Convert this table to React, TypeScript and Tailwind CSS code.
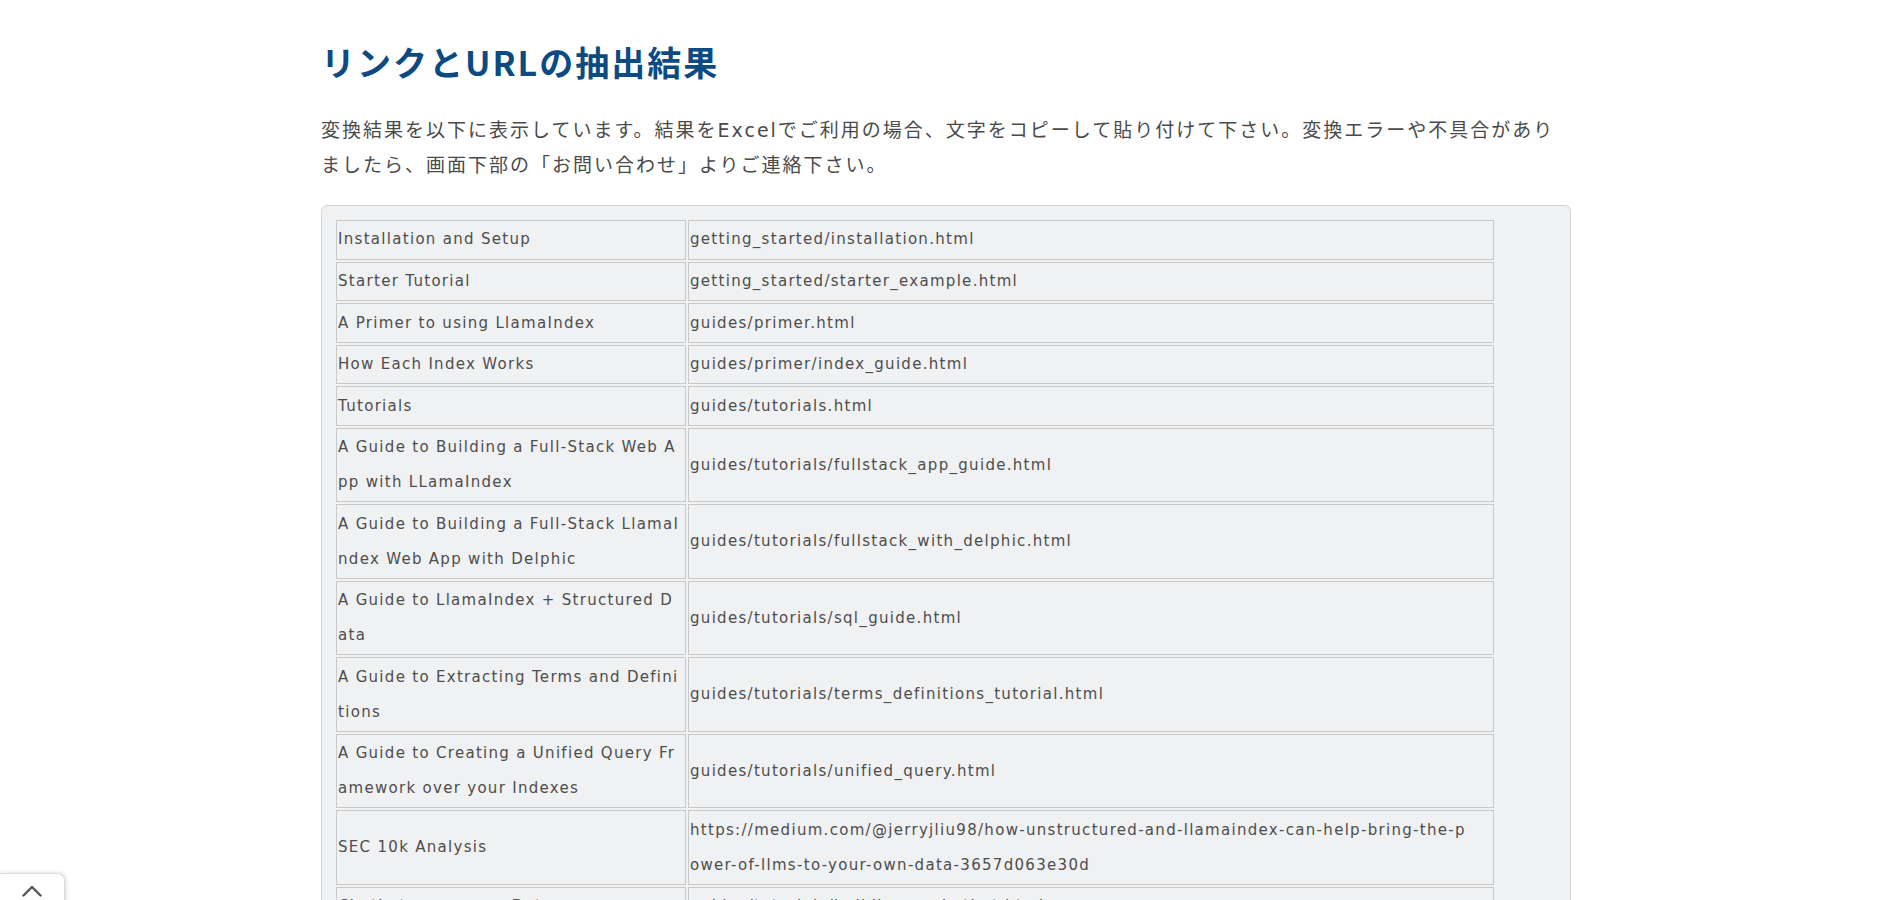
interface LinkRow {
  title: string;
  url: string;
}

const rows: LinkRow[] = [
  { title: "Installation and Setup", url: "getting_started/installation.html" },
  { title: "Starter Tutorial", url: "getting_started/starter_example.html" },
  { title: "A Primer to using LlamaIndex", url: "guides/primer.html" },
  { title: "How Each Index Works", url: "guides/primer/index_guide.html" },
  { title: "Tutorials", url: "guides/tutorials.html" },
  { title: "A Guide to Building a Full-Stack Web App with LLamaIndex", url: "guides/tutorials/fullstack_app_guide.html" },
  { title: "A Guide to Building a Full-Stack LlamaIndex Web App with Delphic", url: "guides/tutorials/fullstack_with_delphic.html" },
  { title: "A Guide to LlamaIndex + Structured Data", url: "guides/tutorials/sql_guide.html" },
  { title: "A Guide to Extracting Terms and Definitions", url: "guides/tutorials/terms_definitions_tutorial.html" },
  { title: "A Guide to Creating a Unified Query Framework over your Indexes", url: "guides/tutorials/unified_query.html" },
  { title: "SEC 10k Analysis", url: "https://medium.com/@jerryjliu98/how-unstructured-and-llamaindex-can-help-bring-the-power-of-llms-to-your-own-data-3657d063e30d" },
  { title: "Chatbots over your Data", url: "guides/tutorials/building_a_chatbot.html" },
  { title: "Using LlamaIndex with Local Models", url: "guides/tutorials/local_models.html" },
];

const jpFont = { fontFamily: '"Noto Sans CJK JP", "Noto Sans", sans-serif' };

const App = () => {
  return (
    <div className="min-h-screen bg-white pb-20" style={jpFont}>
      <div className="mx-auto w-[1250px] pt-[38px]">
        <h1 className="text-[34px] leading-[48px] font-bold tracking-[2px] text-[#0b4b82]">
          リンクとURLの抽出結果
        </h1>
        <p
          className="mt-[27px] text-[19px] leading-[35px] tracking-[2px] text-[#4a4a4a]"
          style={{ fontFamily: '"DejaVu Sans", "Noto Sans CJK JP", sans-serif' }}
        >
          変換結果を以下に表示しています。結果をExcelでご利用の場合、文字をコピーして貼り付けて下さい。変換エラーや不具合がありましたら、画面下部の「お問い合わせ」よりご連絡下さい。
        </p>
        {/* 結果テーブル */}
        <div className="mt-[22px] rounded-[6px] border border-[#d3d3d3] bg-[#f0f1f3] p-[12px]">
          <table
            className="w-[1162px] table-fixed border-separate border-spacing-[2px] text-[15px] tracking-[1.3px] text-[#4d4d4d]"
            style={{ fontFamily: '"DejaVu Sans", Verdana, sans-serif' }}
          >
            <colgroup>
              <col className="w-[350px]" />
              <col />
            </colgroup>
            <tbody>
              {rows.map((row) => (
                <tr key={row.title}>
                  <td className="border border-[#c9c9c9] pl-[1px] pr-[3.5px] py-[1.35px] leading-[34.9px] break-all align-middle">
                    {row.title}
                  </td>
                  <td className="border border-[#c9c9c9] pl-[1px] pr-[25px] py-[1.35px] leading-[34.9px] break-all align-middle">
                    {row.url}
                  </td>
                </tr>
              ))}
            </tbody>
          </table>
        </div>
      </div>

      {/* ページトップへ */}
      <button className="fixed bottom-[-20px] left-0 flex h-[47px] w-[65px] justify-center rounded-tr-[7px] border-t border-r border-[#dcdcdc] bg-white pt-[11px] shadow-[1px_0_4px_rgba(0,0,0,0.15)]">
        <svg width="20" height="12" viewBox="0 0 20 12" fill="none">
          <path d="M1.5 10.5 L10 2 L18.5 10.5" stroke="#555" strokeWidth="2.4" strokeLinecap="round" strokeLinejoin="round" />
        </svg>
      </button>
    </div>
  );
};

export default App;
